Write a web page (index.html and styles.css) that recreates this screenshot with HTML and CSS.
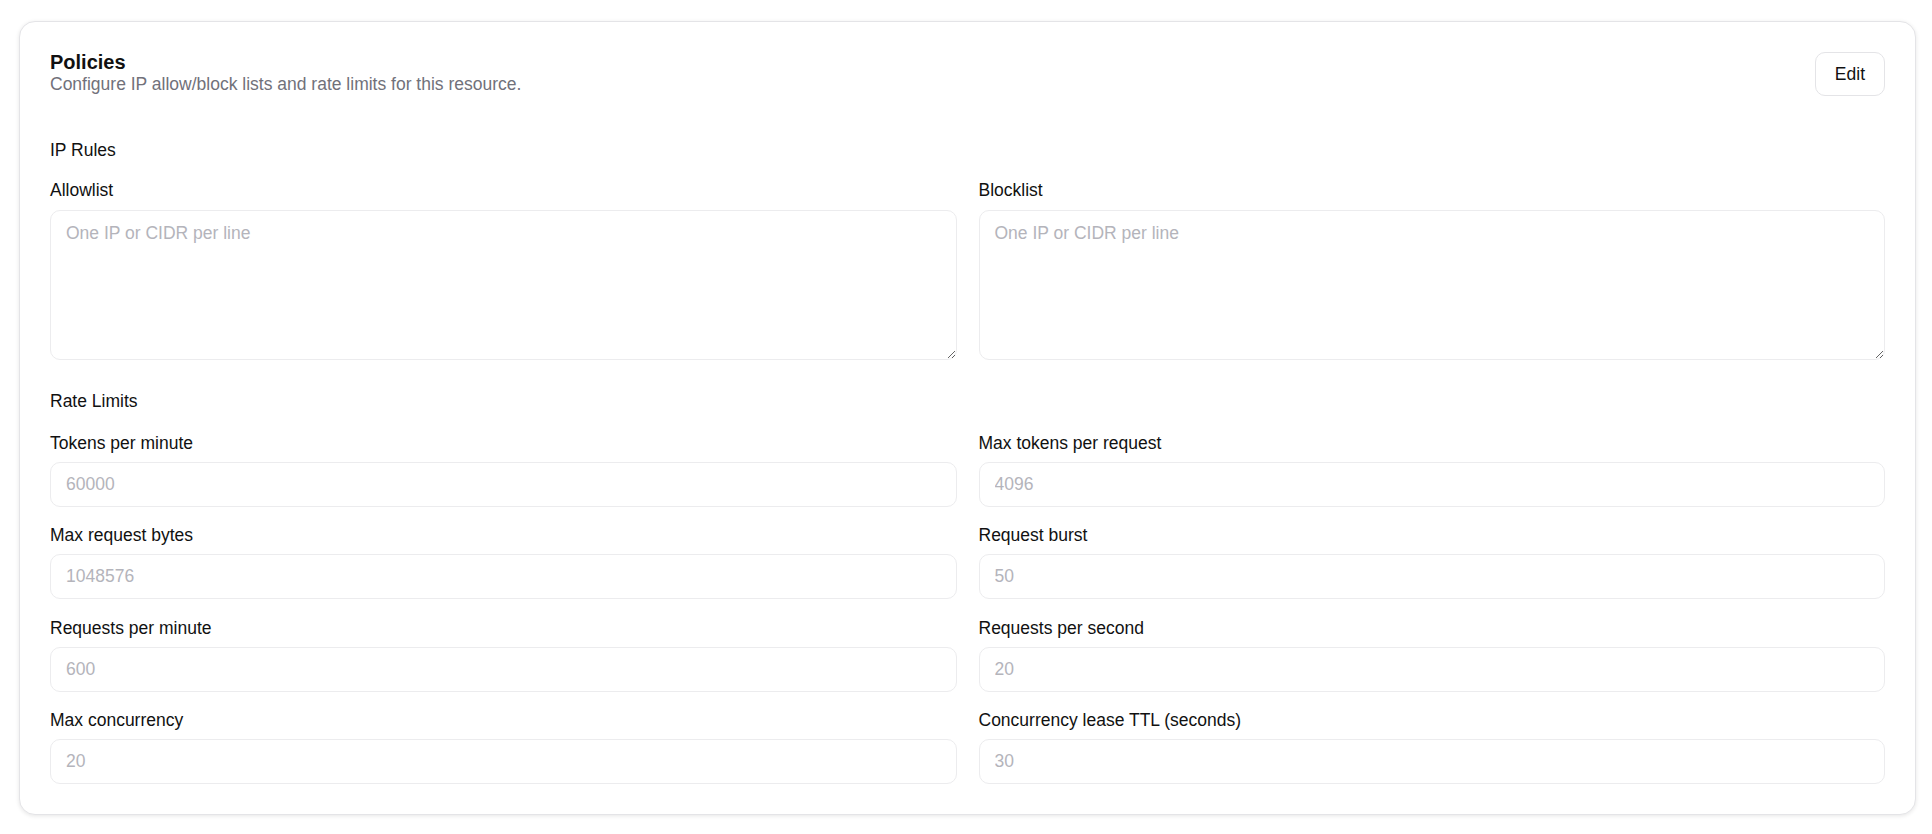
FILE: index.html
```html
<!DOCTYPE html>
<html lang="en">
<head>
  <meta charset="UTF-8">
  <title>Policies</title>
  <link rel="stylesheet" href="styles.css">
</head>
<body>
  <div class="card">
    <div class="card-header">
      <div>
        <h2 class="title">Policies</h2>
        <p class="subtitle">Configure IP allow/block lists and rate limits for this resource.</p>
      </div>
      <button class="btn">Edit</button>
    </div>

    <div class="section">
      <div class="section-title">IP Rules</div>
      <div class="grid">
        <label class="field field-area">
          <span>Allowlist</span>
          <textarea placeholder="One IP or CIDR per line"></textarea>
        </label>
        <label class="field field-area">
          <span>Blocklist</span>
          <textarea placeholder="One IP or CIDR per line"></textarea>
        </label>
      </div>
    </div>

    <div class="section">
      <div class="section-title">Rate Limits</div>
      <div class="grid grid-inputs">
        <label class="field"><span>Tokens per minute</span><input type="text" placeholder="60000"></label>
        <label class="field"><span>Max tokens per request</span><input type="text" placeholder="4096"></label>
        <label class="field"><span>Max request bytes</span><input type="text" placeholder="1048576"></label>
        <label class="field"><span>Request burst</span><input type="text" placeholder="50"></label>
        <label class="field"><span>Requests per minute</span><input type="text" placeholder="600"></label>
        <label class="field"><span>Requests per second</span><input type="text" placeholder="20"></label>
        <label class="field"><span>Max concurrency</span><input type="text" placeholder="20"></label>
        <label class="field"><span>Concurrency lease TTL (seconds)</span><input type="text" placeholder="30"></label>
      </div>
    </div>
  </div>
</body>
</html>
```

FILE: styles.css
```css
body {
  margin: 0;
  padding: 21px 16px 20px 19px;
  background: #fff;
  color: #111;
  font-family: "Liberation Sans", Arial, sans-serif;
  font-size: 17.5px;
}
.card {
  border: 1px solid #e4e4e7;
  border-radius: 16px;
  padding: 30px;
  box-shadow: 0 1px 4px rgba(0, 0, 0, 0.1);
  background: #fff;
}
.card-header {
  display: flex;
  justify-content: space-between;
  align-items: flex-start;
  margin-bottom: 42px;
}
.title {
  margin: 0;
  font-size: 20px;
  line-height: 20px;
  font-weight: bold;
}
.subtitle {
  margin: 0;
  color: #71717a;
  line-height: 24px;
}
.btn {
  height: 44px;
  padding: 0 19px;
  border: 1px solid #e4e4e7;
  border-radius: 10px;
  background: #fff;
  color: #111;
  font-family: inherit;
  font-size: 17.5px;
  cursor: pointer;
}
.section + .section {
  margin-top: 29px;
}
.section-title {
  line-height: 24px;
  margin-bottom: 16px;
}
.grid {
  display: grid;
  grid-template-columns: 1fr 1fr;
  column-gap: 22px;
  row-gap: 14px;
}
.grid-inputs {
  padding-top: 2px;
  row-gap: 16.4px;
}
.field {
  display: flex;
  flex-direction: column;
  gap: 7px;
}
.field span {
  line-height: 24px;
}
.field-area {
  gap: 8px;
}
input, textarea {
  box-sizing: border-box;
  width: 100%;
  border: 1px solid #ececee;
  border-radius: 10px;
  background: #fff;
  color: #111;
  font-family: inherit;
  font-size: 17.5px;
  padding: 0 15px;
  outline: none;
}
input {
  height: 45px;
}
textarea {
  height: 150px;
  padding-top: 10px;
  line-height: 24px;
  resize: vertical;
}
::placeholder {
  color: #b4b4bb;
}
```
